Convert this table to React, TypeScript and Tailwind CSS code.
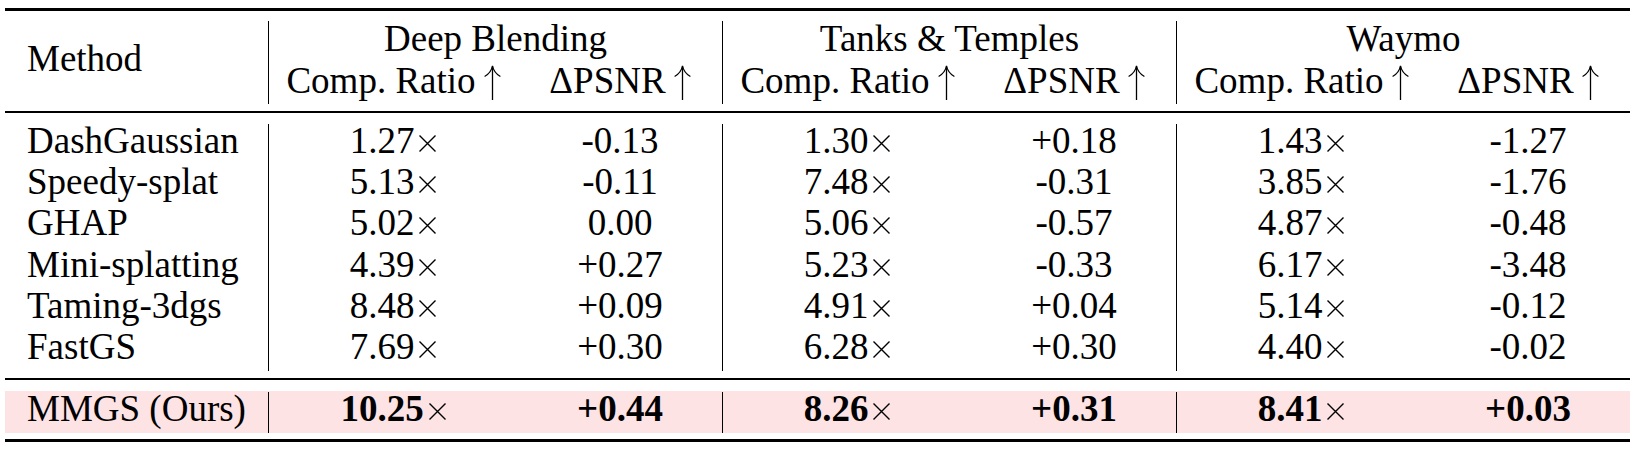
import React from 'react';

type Row = {
  name: string;
  vals: string[];
};

const groups = ['Deep Blending', 'Tanks & Temples', 'Waymo'];

const rows: Row[] = [
  { name: 'DashGaussian', vals: ['1.27', '-0.13', '1.30', '+0.18', '1.43', '-1.27'] },
  { name: 'Speedy-splat', vals: ['5.13', '-0.11', '7.48', '-0.31', '3.85', '-1.76'] },
  { name: 'GHAP', vals: ['5.02', '0.00', '5.06', '-0.57', '4.87', '-0.48'] },
  { name: 'Mini-splatting', vals: ['4.39', '+0.27', '5.23', '-0.33', '6.17', '-3.48'] },
  { name: 'Taming-3dgs', vals: ['8.48', '+0.09', '4.91', '+0.04', '5.14', '-0.12'] },
  { name: 'FastGS', vals: ['7.69', '+0.30', '6.28', '+0.30', '4.40', '-0.02'] },
];

const ours: Row = { name: 'MMGS (Ours)', vals: ['10.25', '+0.44', '8.26', '+0.31', '8.41', '+0.03'] };

// math-style up arrow (tall, thin) like \uparrow
function UpArrow() {
  return (
    <svg width="17" height="35" viewBox="0 0 17 35" className="inline-block align-[-7px] ml-[8px]">
      <path d="M8.5 1.5 L8.5 35" stroke="black" strokeWidth="1.3" fill="none" />
      <path d="M8.5 0.8 Q7.2 7.5 0.6 11.5 M8.5 0.8 Q9.8 7.5 16.4 11.5" stroke="black" strokeWidth="1.2" fill="none" />
    </svg>
  );
}

// math-style \times
function Times() {
  return (
    <svg width="19" height="19" viewBox="0 0 19 19" className="inline-block align-[0px] ml-[4px]">
      <path d="M1.5 1.5 L17.5 17.5 M17.5 1.5 L1.5 17.5" stroke="black" strokeWidth="1.4" fill="none" />
    </svg>
  );
}

function TableRow({ row, bold }: { row: Row; bold?: boolean }) {
  return (
    <div className="flex h-[41.2px] leading-[33px]">
      <div className="w-[263px] pl-[22px]">{row.name}</div>
      {[0, 1, 2].map((g) => (
        <div key={g} className="flex w-[454px] border-l border-black">
          <div className="w-[249px] text-center">
            <span className={bold ? 'font-bold' : ''}>{row.vals[g * 2]}</span>
            <Times />
          </div>
          <div className="w-[204px] text-center">
            <span className={bold ? 'font-bold' : ''}>{row.vals[g * 2 + 1]}</span>
          </div>
        </div>
      ))}
    </div>
  );
}

export default function App() {
  return (
    <div className="min-h-[450px] bg-white pt-[8px] pl-[5px] text-black text-[37px] font-['Liberation_Serif',serif]">
      <div className="w-[1625px]">
        {/* top rule */}
        <div className="h-[2.5px] bg-black" />

        {/* header */}
        <div className="flex pt-[10.5px] pb-[7px]">
          <div className="w-[263px] pl-[22px] pt-[21px] leading-[33px]">Method</div>
          {groups.map((g) => (
            <div key={g} className="w-[454px] border-l border-black">
              <div className="h-[41.5px] leading-[36px] text-center">{g}</div>
              <div className="flex h-[41.5px] leading-[36px]">
                <div className="w-[249px] text-center">
                  Comp. Ratio
                  <UpArrow />
                </div>
                <div className="w-[204px] text-center">
                  ΔPSNR
                  <UpArrow />
                </div>
              </div>
            </div>
          ))}
        </div>

        {/* mid rule */}
        <div className="h-[1.5px] bg-black" />

        <div className="pt-[11.5px] pb-[7px]">
          {rows.map((r) => (
            <TableRow key={r.name} row={r} />
          ))}
        </div>

        <div className="h-[2px] bg-black" />

        <div className="pt-[11px] pb-[6px]">
          <div className="bg-[#fde3e4] h-[42px] pt-[0.4px]">
            <TableRow row={ours} bold />
          </div>
        </div>

        {/* bottom rule */}
        <div className="h-[2.5px] bg-black" />
      </div>
    </div>
  );
}
